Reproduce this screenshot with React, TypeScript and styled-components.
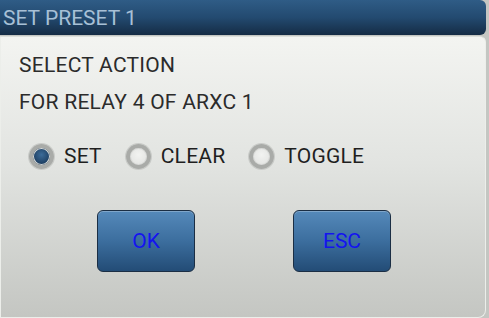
import React, { useState } from 'react';
import styled, { createGlobalStyle } from 'styled-components';

const GlobalStyle = createGlobalStyle`
  html, body {
    margin: 0;
    padding: 0;
    background: #c4c6c2;
  }
  body {
    font-family: Roboto, 'Liberation Sans', sans-serif;
  }
`;

const Dialog = styled.div`
  width: 489px;
  height: 318px;
  display: flex;
  flex-direction: column;
  overflow: hidden;
`;

const TitleBar = styled.div`
  height: 35px;
  margin-right: 3px;
  display: flex;
  align-items: center;
  padding-left: 3px;
  background: linear-gradient(to bottom, #2f5c86 0%, #234a70 50%, #152c45 100%);
  border-radius: 0 6px 6px 0;
  color: #a7c0d6;
  font-size: 21px;
`;

const Body = styled.div`
  flex: 1;
  margin-right: 3px;
  margin-top: 1px;
  display: flex;
  flex-direction: column;
  padding: 10px 0 0 18px;
  background: linear-gradient(to bottom, #f3f4f1 0%, #e2e4e1 45%, #c4c6c2 100%);
  border: 1px solid #eceeea;
  border-top-color: #dcdfdb;
  border-radius: 0 6px 8px 0;
`;

const Line = styled.div`
  font-size: 21px;
  letter-spacing: 0.25px;
  color: #2b2b2b;
  line-height: 37px;
`;

const RadioRow = styled.div`
  display: flex;
  align-items: center;
  height: 24px;
  margin-top: 23px;
  padding-left: 10px;
`;

const RadioItem = styled.label`
  display: flex;
  align-items: center;
  cursor: pointer;
  margin-right: 24px;
  font-size: 21px;
  letter-spacing: 0.2px;
  color: #1f1f1f;
`;

const RadioCircle = styled.span<{ $on: boolean }>`
  width: 25px;
  height: 25px;
  box-sizing: border-box;
  border-radius: 50%;
  margin-right: 10px;
  border: 4px solid #a9aba8;
  box-shadow: inset 0 0 0 1px #d8d9d7, 0 0 0 1px #c9cbc8;
  background: ${(p) =>
    p.$on
      ? 'radial-gradient(circle at 50% 40%, #3d6c99 0%, #1c3d60 70%, #122a44 100%)'
      : 'radial-gradient(circle at 50% 40%, #f2f3f1 0%, #dfe0de 100%)'};
`;

const ButtonRow = styled.div`
  display: flex;
  margin-top: 42px;
  padding-left: 78px;
  gap: 98px;
`;

const Button = styled.button`
  width: 98px;
  height: 62px;
  border: 1.5px solid #1b2e44;
  border-radius: 6px;
  background: linear-gradient(to bottom, #5589ba 0%, #3c6e9e 50%, #234c76 100%);
  box-shadow: inset 0 1px 0 rgba(255, 255, 255, 0.25);
  color: #1414f0;
  font-family: Roboto, 'Liberation Sans', sans-serif;
  font-size: 21px;
  cursor: pointer;
  padding: 0;
`;

const options = ['SET', 'CLEAR', 'TOGGLE'];

export default function App() {
  const [choice, setChoice] = useState('SET');
  return (
    <Dialog>
      <GlobalStyle />
      <TitleBar>SET PRESET 1</TitleBar>
      <Body>
        <Line>SELECT ACTION</Line>
        <Line>FOR RELAY 4 OF ARXC 1</Line>
        <RadioRow>
          {options.map((o) => (
            <RadioItem key={o} onClick={() => setChoice(o)}>
              <RadioCircle $on={choice === o} />
              {o}
            </RadioItem>
          ))}
        </RadioRow>
        <ButtonRow>
          <Button>OK</Button>
          <Button>ESC</Button>
        </ButtonRow>
      </Body>
    </Dialog>
  );
}
